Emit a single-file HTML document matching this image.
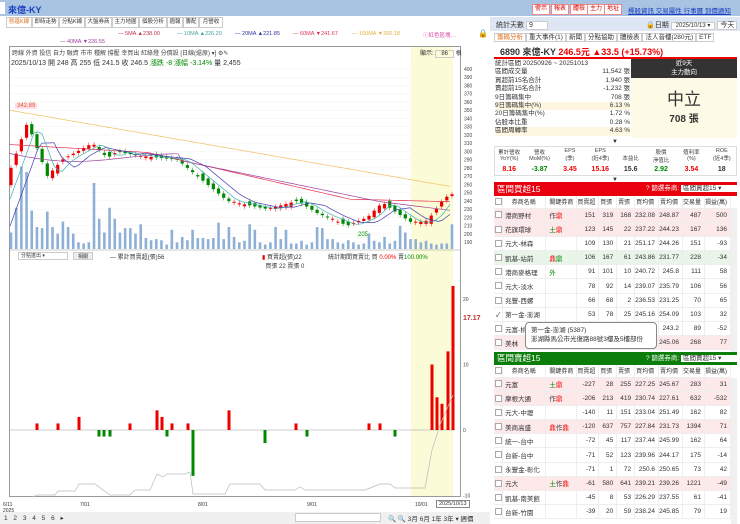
<!DOCTYPE html>
<html><head><meta charset="utf-8">
<style>
*{box-sizing:border-box;margin:0;padding:0}
body{width:740px;height:524px;overflow:hidden;background:#fff;font-family:"Liberation Sans","Noto Sans CJK TC",sans-serif;font-size:7px;color:#333;position:relative}
.a{position:absolute;white-space:nowrap}
.tab{position:absolute;top:17px;height:11px;border:1px solid #ccc;background:#fff;font-size:5.5px;line-height:9px;text-align:center;overflow:hidden}
.btn{position:absolute;top:4px;height:11px;border:1px solid #e88;background:#fff;color:#d00;font-size:6px;line-height:9px;padding:0 2px}
table{border-collapse:collapse;position:absolute}
.t td{border-bottom:1px solid #eee;border-right:1px solid #eee;height:14.2px;font-size:6.5px;text-align:right;padding-right:3px;white-space:nowrap}
.t td:first-child{text-align:center;padding:0}
.t td:nth-child(2){text-align:left;padding-left:2px}
.t td:nth-child(3){text-align:left;padding-left:3px}
.cb{display:inline-block;width:7px;height:7px;border:1px solid #aaa;background:#fff;vertical-align:middle}
.pk td{background:#fde8ea}.gr td{background:#e8f5e8}
.h td{background:#fff;height:12px;text-align:center!important;color:#333;font-size:6px}
.r{color:#e00}.g{color:#080}
</style></head><body>
<div class="a" style="left:0;top:0;width:490px;height:16px;background:#a9c3e3"></div>
<div class="a" style="left:0;top:2px;width:5px;height:12px;background:#fff"></div>
<div class="a" style="left:8px;top:3px;font-size:9px;font-weight:bold;color:#1a3fc0">來億-KY</div>
<div class="tab" style="left:6px;width:26px;color:#e07020">▦還K線</div>
<div class="tab" style="left:32px;width:27px">即時走勢</div>
<div class="tab" style="left:59px;width:26px">分點K線</div>
<div class="tab" style="left:85px;width:27px">大盤券商</div>
<div class="tab" style="left:112px;width:27px">主力地圖</div>
<div class="tab" style="left:139px;width:28px">個股分析</div>
<div class="tab" style="left:167px;width:16px">週報</div>
<div class="tab" style="left:183px;width:16px">籌配</div>
<div class="tab" style="left:199px;width:24px">月營收</div>
<div class="a" style="left:118px;top:31px;font-size:5.5px;color:#c03050">— 5MA ▲238.00</div>
<div class="a" style="left:177px;top:31px;font-size:5.5px;color:#40a0a0">— 10MA ▲226.20</div>
<div class="a" style="left:235px;top:31px;font-size:5.5px;color:#3030a0">— 20MA ▲221.85</div>
<div class="a" style="left:293px;top:31px;font-size:5.5px;color:#e03050">— 60MA ▼241.67</div>
<div class="a" style="left:352px;top:31px;font-size:5.5px;color:#e0b040">— 100MA ▼260.18</div>
<div class="a" style="left:60px;top:39px;font-size:5.5px;color:#a040a0">— 40MA ▼226.55</div>
<div class="a" style="left:423px;top:31px;font-size:5.5px;color:#e040a0">ⓘ紅色區塊…</div>
<div class="a" style="left:478px;top:29px;font-size:8px">🔒</div>
<div class="a" style="left:9px;top:46px;width:452px;height:451px;border:1px solid #999"></div>
<div class="a" style="left:411px;top:47px;width:42px;height:449px;background:#fbfbd8"></div>
<div class="a" style="left:12px;top:48px;font-size:6px;color:#444">跨線 外資 投信 自力 融資 市市 種解 撐壓 幸買出 紅綠燈 分價設 [日線(還原) ▾] ⚙✎</div>
<div class="a" style="left:420px;top:48px;font-size:6px">顯示: <span style="border:1px solid #ccc;padding:0 5px">86</span> 根</div>
<div class="a" style="left:11px;top:58px;font-size:7px;color:#333">2025/10/13 開 248 高 255 低 241.5 收 246.5 <span class="g">漲跌 -8 漲幅 -3.14%</span> 量 2,455</div>
<div class="a" style="left:15px;top:103px;font-size:6px;color:#e06020;background:#fde;padding:0 2px">342.89</div>
<div class="a" style="left:356px;top:232px;font-size:6px;color:#080;background:#efe;padding:0 2px">205</div>
<svg class="a" style="left:0;top:0" width="490" height="524" id="sv"></svg>
<div class="a" style="left:18px;top:252px;width:50px;height:8px;border:1px solid #ccc;font-size:5px;line-height:6px;padding-left:2px">分點進出 ▾</div>
<div class="a" style="left:73px;top:252px;width:20px;height:8px;border:1px solid #ccc;background:#eee;font-size:5px;text-align:center">相關</div>
<div class="a" style="left:110px;top:252px;font-size:6px">— 累計買賣超(張)56</div>
<div class="a" style="left:262px;top:252px;font-size:6px"><span class="r">▮</span> 買賣超(張)22<br>&nbsp;&nbsp;買張 22 賣張 0</div>
<div class="a" style="left:328px;top:252px;font-size:6px">統計期間買賣比 買 <span class="r">0.00%</span> 賣<span class="g">100.00%</span></div>
<div class="a" style="left:463px;top:315px;font-size:7px;color:#c03030;font-weight:bold">17.17</div>
<div class="a" style="left:3px;top:502px;font-size:5px">6/11<br>2025</div>
<div class="a" style="left:80px;top:502px;font-size:5px">7/01</div>
<div class="a" style="left:198px;top:502px;font-size:5px">8/01</div>
<div class="a" style="left:307px;top:502px;font-size:5px">9/01</div>
<div class="a" style="left:415px;top:502px;font-size:5px">10/01</div>
<div class="a" style="left:436px;top:500px;font-size:5.5px;border:1px solid #888;padding:0 2px">2025/10/13</div>
<div class="a" style="left:0;top:512px;width:490px;height:12px;background:#f0f0f0"></div>
<div class="a" style="left:4px;top:514px;font-size:6.5px;letter-spacing:2px">1 2 3 4 5 6 ▸</div>
<div class="a" style="left:295px;top:513px;width:86px;height:9px;border:1px solid #ccc;background:#fff"></div>
<div class="a" style="left:388px;top:513px;font-size:6.5px">🔍 🔍 3月 6月 1年 3年 ▾ 週價</div>
<div class="a" style="left:490px;top:0;width:250px;height:16px;background:#a9c3e3"></div>
<div class="btn" style="left:532px">警示</div><div class="btn" style="left:551px">報表</div><div class="btn" style="left:570px">體檢</div><div class="btn" style="left:587px">主力</div><div class="btn" style="left:604px">地址</div>
<div class="a" style="left:628px;top:5px;font-size:6.5px;color:#1a3fc0;text-decoration:underline">標股資訊 交易屬性 行事曆 到價通知</div>
<div class="a" style="left:490px;top:17px;width:250px;height:14px;background:#dde6f2"></div>
<div class="a" style="left:496px;top:20px;font-size:7px">統計天數 <span style="background:#fff;border:1px solid #ccc;padding:0 14px 0 2px">9</span></div>
<div class="a" style="left:646px;top:20px;font-size:7px">🔒日期 <span style="background:#fff;border:1px solid #ccc;padding:0 4px;font-size:6px">2025/10/13 ▾</span> <span style="background:#fff;border:1px solid #ccc;padding:0 2px">今天</span></div>
<div class="a" style="left:494px;top:32px;font-size:6.5px;line-height:11px"><span style="color:#e07020;border:1px solid #ccc;padding:0 2px">籌碼分析</span><span style="border:1px solid #ccc;padding:0 2px">重大事件(1)</span><span style="border:1px solid #ccc;padding:0 2px">新聞</span><span style="border:1px solid #ccc;padding:0 2px">分點協助</span><span style="border:1px solid #ccc;padding:0 2px">體檢表</span><span style="border:1px solid #ccc;padding:0 2px">法人音樓(280元)</span><span style="border:1px solid #ccc;padding:0 2px">ETF</span></div>
<div class="a" style="left:500px;top:45px;font-size:9px;font-weight:bold">6890 來億-KY <span class="r">246.5元 ▲33.5 (+15.73%)</span></div>
<div class="a" style="left:494px;top:57px;width:243px;height:1.5px;background:#e00"></div>
<div class="a" style="left:495px;top:60px;width:135px;font-size:6.5px;line-height:8.4px">
<div>統計區間 20250926 ~ 20251013</div>
<div>區間成交量<span style="float:right">11,542 張</span></div>
<div>買超前15名合計<span style="float:right">1,940 張</span></div>
<div>賣超前15名合計<span style="float:right">-1,232 張</span></div>
<div>9日籌碼集中<span style="float:right">708 張</span></div>
<div style="background:#fdf6e0">9日籌碼集中(%)<span style="float:right">6.13 %</span></div>
<div>20日籌碼集中(%)<span style="float:right">1.72 %</span></div>
<div>佔股本比重<span style="float:right">0.28 %</span></div>
<div style="background:#fdf6e0">區間周轉率<span style="float:right">4.63 %</span></div></div>
<div class="a" style="left:631px;top:59px;width:106px;height:19px;background:#333;color:#fff;text-align:center;font-size:6.5px;line-height:9px">近9天<br>主力動向</div>
<div class="a" style="left:631px;top:78px;width:106px;height:60px;background:#fdfbe6;text-align:center"><div style="font-size:17px;margin-top:7px">中立</div><div style="font-size:10px;font-weight:bold">708 張</div></div>
<div class="a" style="left:612px;top:139px;font-size:6px">▼</div>
<div class="a" style="left:494px;top:146px;width:243px;height:30px;border:1px solid #ddd"></div>
<div class="a" style="left:494px;top:148px;width:243px;font-size:5.5px;display:flex;text-align:center;color:#444">
<div style="flex:1">累計營收<br>YoY(%)</div><div style="flex:1">營收<br>MoM(%)</div><div style="flex:1">EPS<br>(季)</div><div style="flex:1">EPS<br>(近4季)</div><div style="flex:1"><br>本益比</div><div style="flex:1">股價<br>淨值比</div><div style="flex:1">殖利率<br>(%)</div><div style="flex:1">ROE<br>(近4季)</div></div>
<div class="a" style="left:494px;top:166px;width:243px;font-size:7px;font-weight:bold;display:flex;text-align:center">
<div style="flex:1" class="r">8.16</div><div style="flex:1" class="g">-3.87</div><div style="flex:1" class="r">3.45</div><div style="flex:1" class="r">15.16</div><div style="flex:1">15.6</div><div style="flex:1" class="g">2.92</div><div style="flex:1" class="r">3.54</div><div style="flex:1">18</div></div>
<div class="a" style="left:612px;top:177px;font-size:6px">▼</div>
<div class="a" style="left:494px;top:182px;width:243px;height:14px;background:#e8000f;color:#fff;font-size:8.5px;line-height:14px;padding-left:3px">區間買超15<span style="position:absolute;left:152px;font-size:6.5px">? 篩選券商: <span style="background:#fff;color:#333;padding:0 18px 0 2px">區間買超15 ▾</span></span></div>
<table class="t" style="left:494px;top:196px;width:237px">
<tr class="h"><td style="width:10px"><span class="cb"></span></td><td style="width:46px">券商名稱</td><td style="width:27px">關鍵券商</td><td style="width:20px">買賣超</td><td style="width:20px">買張</td><td style="width:20px">賣張</td><td style="width:21px">買均價</td><td style="width:24px">賣均價</td><td style="width:21px">交易量</td><td>損益(萬)</td></tr>
<tr class="pk"><td><span class="cb"></span></td><td>港商野村</td><td>作<span class="r">鼎</span></td><td>151</td><td>319</td><td>168</td><td>232.08</td><td>248.87</td><td>487</td><td>500</td></tr>
<tr class="pk"><td><span class="cb"></span></td><td>花旗環球</td><td><span class="g">土</span><span class="r">鼎</span></td><td>123</td><td>145</td><td>22</td><td>237.22</td><td>244.23</td><td>167</td><td>136</td></tr>
<tr><td><span class="cb"></span></td><td>元大-林森</td><td></td><td>109</td><td>130</td><td>21</td><td>251.17</td><td>244.26</td><td>151</td><td>-93</td></tr>
<tr class="gr"><td><span class="cb"></span></td><td>凱基-站前</td><td><span class="r">鼎</span><span class="g">鼎</span></td><td>106</td><td>167</td><td>61</td><td>243.86</td><td>231.77</td><td>228</td><td>-34</td></tr>
<tr><td><span class="cb"></span></td><td>港商麥格理</td><td class="g">外</td><td>91</td><td>101</td><td>10</td><td>240.72</td><td>245.8</td><td>111</td><td>58</td></tr>
<tr><td><span class="cb"></span></td><td>元大-淡水</td><td></td><td>78</td><td>92</td><td>14</td><td>239.07</td><td>235.79</td><td>106</td><td>56</td></tr>
<tr><td><span class="cb"></span></td><td>兆豐-西螺</td><td></td><td>66</td><td>68</td><td>2</td><td>236.53</td><td>231.25</td><td>70</td><td>65</td></tr>
<tr><td>✓</td><td>第一金-澎湖</td><td></td><td>53</td><td>78</td><td>25</td><td>245.16</td><td>254.09</td><td>103</td><td>32</td></tr>
<tr><td><span class="cb"></span></td><td>元富-桃</td><td></td><td>50</td><td>69</td><td>19</td><td>243.82</td><td>243.2</td><td>89</td><td>-52</td></tr>
<tr class="pk"><td><span class="cb"></span></td><td>美林</td><td></td><td>49</td><td>158</td><td>109</td><td>240.31</td><td>245.06</td><td>268</td><td>77</td></tr>
</table>
<div class="a" style="left:525px;top:322px;width:132px;height:27px;background:#fff;border:1px solid #888;border-radius:4px;font-size:6.5px;line-height:9px;padding:3px 5px">第一金-澎湖 (5387)<br>澎湖縣馬公市光復路88號3樓及5樓部份</div>
<div class="a" style="left:494px;top:352px;width:243px;height:13px;background:#0a7d0a;color:#fff;font-size:8.5px;line-height:13px;padding-left:3px">區間賣超15<span style="position:absolute;left:152px;font-size:6.5px">? 篩選券商: <span style="background:#fff;color:#333;padding:0 18px 0 2px">區間賣超15 ▾</span></span></div>
<table class="t" style="left:494px;top:365px;width:237px">
<tr class="h"><td style="width:10px"><span class="cb"></span></td><td style="width:46px">券商名稱</td><td style="width:27px">關鍵券商</td><td style="width:20px">買賣超</td><td style="width:20px">買張</td><td style="width:20px">賣張</td><td style="width:21px">買均價</td><td style="width:24px">賣均價</td><td style="width:21px">交易量</td><td>損益(萬)</td></tr>
<tr class="pk"><td><span class="cb"></span></td><td>元富</td><td><span class="g">土</span><span class="r">鼎</span></td><td>-227</td><td>28</td><td>255</td><td>227.25</td><td>245.67</td><td>283</td><td>31</td></tr>
<tr class="pk"><td><span class="cb"></span></td><td>摩根大通</td><td>作<span class="r">鼎</span></td><td>-206</td><td>213</td><td>419</td><td>230.74</td><td>227.61</td><td>632</td><td>-532</td></tr>
<tr><td><span class="cb"></span></td><td>元大-中壢</td><td></td><td>-140</td><td>11</td><td>151</td><td>233.04</td><td>251.49</td><td>162</td><td>82</td></tr>
<tr class="pk"><td><span class="cb"></span></td><td>美商高盛</td><td><span class="r">鼎</span>作<span class="r">鼎</span></td><td>-120</td><td>637</td><td>757</td><td>227.84</td><td>231.73</td><td>1394</td><td>71</td></tr>
<tr><td><span class="cb"></span></td><td>統一-台中</td><td></td><td>-72</td><td>45</td><td>117</td><td>237.44</td><td>245.99</td><td>162</td><td>64</td></tr>
<tr><td><span class="cb"></span></td><td>台新-台中</td><td></td><td>-71</td><td>52</td><td>123</td><td>239.96</td><td>244.17</td><td>175</td><td>-14</td></tr>
<tr><td><span class="cb"></span></td><td>永豐金-彰化</td><td></td><td>-71</td><td>1</td><td>72</td><td>250.6</td><td>250.65</td><td>73</td><td>42</td></tr>
<tr class="pk"><td><span class="cb"></span></td><td>元大</td><td><span class="g">土</span>作<span class="r">鼎</span></td><td>-61</td><td>580</td><td>641</td><td>239.21</td><td>239.26</td><td>1221</td><td>-49</td></tr>
<tr><td><span class="cb"></span></td><td>凱基-南美館</td><td></td><td>-45</td><td>8</td><td>53</td><td>226.29</td><td>237.55</td><td>61</td><td>-41</td></tr>
<tr><td><span class="cb"></span></td><td>台新-竹園</td><td></td><td>-39</td><td>20</td><td>59</td><td>238.24</td><td>245.85</td><td>79</td><td>19</td></tr>
</table>
<div class="a" style="left:731px;top:208px;width:6px;height:144px;background:#f0f0f0"></div>
<div class="a" style="left:731px;top:378px;width:6px;height:146px;background:#f0f0f0"></div>
<script>
var s=document.getElementById('sv'),h='';
function Y(p){return 69+(400-p)*0.824}
var ax=[400,390,380,370,360,350,340,330,320,310,300,290,280,270,260,250,240,230,220,210,200,190];
ax.forEach(function(p){h+='<text x="464" y="'+(Y(p)+2)+'" font-size="5" fill="#444">'+p+'</text>';h+='<line x1="10" x2="411" y1="'+Y(p)+'" y2="'+Y(p)+'" stroke="#f2f2f2" stroke-width="0.5"/>'});
var kp=[[10,268],[30,335],[50,270],[65,290],[95,310],[110,292],[120,300],[140,295],[180,290],[200,270],[230,240],[270,230],[300,240],[320,225],[350,210],[370,220],[385,238],[400,225],[415,213],[430,216],[445,240],[452,248]];
function P(x){for(var i=1;i<kp.length;i++){if(x<=kp[i][0]){var a=kp[i-1],b=kp[i];return a[1]+(b[1]-a[1])*(x-a[0])/(b[0]-a[0])}}return 248}
var vols=[30,75,150,140,70,40,38,68,40,28,50,40,28,12,10,12,120,55,30,75,55,30,38,38,28,45,20,16,18,16,8,35,12,22,16,35,20,20,18,20,48,18,40,22,12,15,45,35,12,8,12,40,18,35,10,10,15,8,12,40,38,18,18,12,10,16,12,8,10,28,15,12,22,10,15,42,30,18,18,12,15,10,8,10,10,45,60,40];
var n=86,st=(452-11)/(n-1);
for(var i=0;i<n;i++){var x=11+i*st,c=P(x+st/2),o=P(x-st/2)+((i*53)%9-4)*0.9;var up=c>=o,col=up?'#e00':'#080';
var t=Math.max(o,c),b=Math.min(o,c);if(t-b<1)t=b+1;
h+='<line x1="'+x+'" x2="'+x+'" y1="'+Y(t+3)+'" y2="'+Y(b-3)+'" stroke="'+col+'" stroke-width="0.5"/>';
h+='<rect x="'+(x-1.6)+'" y="'+Y(t)+'" width="3.2" height="'+Math.max(1,(t-b)*0.824)+'" fill="'+col+'"/>';
var v=vols[i%vols.length]*0.55;h+='<rect x="'+(x-1.3)+'" y="'+(249-v)+'" width="2.6" height="'+v+'" fill="#8fb0d6"/>'}
function line(f,col){var d='';for(var x=10;x<=452;x+=4){d+=(d?'L':'M')+x+' '+Y(f(x)).toFixed(1)}h+='<path d="'+d+'" fill="none" stroke="'+col+'" stroke-width="0.7"/>'}
line(function(x){return 352-x*0.21},'#f0c060');
line(function(x){return x<150?309-x*0.07:x<350?298-(x-150)*0.28:242-(x-350)*0.03},'#e03050');
line(function(x){return x<180?300-x*0.06-8*Math.sin(x/40):289-(x-180)*0.25+Math.max(0,x-380)*0.1},'#a040a0');
line(function(x){return 0.5*P(x-10)+0.5*P(x-25)},'#4040b0');
line(function(x){return 0.6*P(x-5)+0.4*P(x-12)},'#40b0b0');
h+='<line x1="10" x2="461" y1="250" y2="250" stroke="#999" stroke-width="0.5"/>';
function Z(v){return 430-v*6.55}
[[20,'20'],[10,'10'],[0,'0'],[-10,'-10']].forEach(function(a){h+='<text x="463" y="'+(Z(a[0])+2)+'" font-size="5" fill="#444">'+a[1]+'</text>'});
h+='<line x1="10" x2="455" y1="430" y2="430" stroke="#bbb" stroke-width="0.7"/>';
var bars=[[37,1],[58,1],[79,2],[99,-1],[104,-1],[110,-1],[130,1],[157,3],[162,2],[167,-1],[172,1],[188,1],[193,-7],[229,3],[265,-2],[296,1],[307,-1],[369,1],[380,1],[395,-1],[432,10],[437,5],[442,4],[448,12],[453,22]];
bars.forEach(function(b){var y0=Z(0),y1=Z(b[1]);h+='<rect x="'+(b[0]-1.5)+'" y="'+Math.min(y0,y1)+'" width="3" height="'+Math.abs(y1-y0)+'" fill="'+(b[1]>0?'#e00':'#080')+'"/>'});
h+='<polyline points="33,497 37,495 55,495 58,491 75,491 79,484 95,484 110,495 130,495 135,490 150,490 157,474 163,477 167,474 185,474 190,472 193,494 225,494 230,484 260,484 265,490 295,490 300,487 305,490 365,490 370,488 380,484 390,484 395,488 425,488 432,450 440,425 453,395" fill="none" stroke="#bbb" stroke-width="0.7"/>';
s.innerHTML=h;
</script>
</body></html>
